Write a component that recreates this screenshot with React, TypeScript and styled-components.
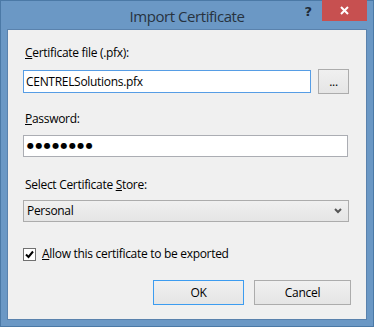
import styled, { createGlobalStyle } from 'styled-components';

const GlobalStyle = createGlobalStyle`
  html, body {
    margin: 0;
    padding: 0;
    background: #ffffff;
  }
  body {
    font-family: 'Open Sans', 'Noto Sans', 'Liberation Sans', sans-serif;
  }
`;

function App() {
  return (
    <>
      <GlobalStyle />
      <Window>
        <TitleBar>
          <Title>Import Certificate</Title>
          <HelpButton>?</HelpButton>
          <CloseButton aria-label="Close">
            <svg width="9" height="9" viewBox="0 0 9 9">
              <path d="M1 1 L8 8 M8 1 L1 8" stroke="#ffffff" strokeWidth="2" />
            </svg>
          </CloseButton>
        </TitleBar>
        <Client>
          <Label $top={15}>
            <u>C</u>ertificate file (.pfx):
          </Label>
          <FileRow>
            <TextField $width={288} $focused>
              CENTRELSolutions.pfx
            </TextField>
            <Button $width={31} $height={25}>
              <Dots>...</Dots>
            </Button>
          </FileRow>
          <Label $top={17}>
            <u>P</u>assword:
          </Label>
          <TextField $width={325} $top={8}>
            <Bullets>●●●●●●●●</Bullets>
          </TextField>
          <Label $top={20}>
            Select Certificate <u>S</u>tore:
          </Label>
          <Select>
            <span>Personal</span>
            <svg width="8" height="6" viewBox="0 0 8 6">
              <path d="M1 1 L4 4 L7 1" stroke="#555555" strokeWidth="2" fill="none" />
            </svg>
          </Select>
          <CheckRow>
            <CheckBox>
              <svg width="11" height="11" viewBox="0 0 11 11">
                <path d="M2 5.5 L4.5 8 L9 2.5" stroke="#000000" strokeWidth="2" fill="none" />
              </svg>
            </CheckBox>
            <span>
              <u>A</u>llow this certificate to be exported
            </span>
          </CheckRow>
          <ButtonRow>
            <Button $width={91} $height={25} $default>
              OK
            </Button>
            <Button $width={97} $height={25}>
              Cancel
            </Button>
          </ButtonRow>
        </Client>
      </Window>
    </>
  );
}

export default App;

const Window = styled.div`
  width: 374px;
  height: 327px;
  box-sizing: border-box;
  border: 1px solid #4b79a6;
  background: #6b98c5;
  display: flex;
  flex-direction: column;
`;

const TitleBar = styled.div`
  position: relative;
  height: 28px;
  display: flex;
  align-items: center;
  justify-content: center;
`;

const Title = styled.div`
  font-size: 15px;
  letter-spacing: -0.45px;
  color: #27333f;
  line-height: 20px;
  margin-top: 1px;
`;

const HelpButton = styled.div`
  position: absolute;
  right: 61px;
  top: 3px;
  font-family: 'DejaVu Sans', sans-serif;
  font-weight: bold;
  font-size: 13px;
  color: #1f2b37;
`;

const CloseButton = styled.div`
  position: absolute;
  right: 6px;
  top: -1px;
  width: 45px;
  height: 21px;
  background: #c75050;
  display: flex;
  align-items: center;
  justify-content: center;
`;

const Client = styled.div`
  flex: 1;
  margin: 0 6px 6px 6px;
  border: 1px solid #5a82ad;
  background: #f0f0f0;
  padding: 0 15px;
  display: flex;
  flex-direction: column;
  align-items: flex-start;
  font-size: 12px;
  letter-spacing: -0.3px;
  color: #000000;
`;

const Label = styled.div<{ $top: number }>`
  margin-top: ${(p) => p.$top}px;
  margin-left: 2px;
  line-height: 16px;
`;

const FileRow = styled.div`
  margin-top: 8px;
  display: flex;
  align-items: center;
  gap: 7px;
`;

const TextField = styled.div<{ $width: number; $focused?: boolean; $top?: number }>`
  box-sizing: border-box;
  width: ${(p) => p.$width}px;
  height: ${(p) => (p.$focused ? 23 : 22)}px;
  margin-top: ${(p) => p.$top ?? 0}px;
  border: 1px solid ${(p) => (p.$focused ? '#569de5' : '#abadb3')};
  background: #ffffff;
  padding: 0 2px;
  display: flex;
  align-items: center;
  line-height: 16px;
`;

const Bullets = styled.span`
  font-family: 'DejaVu Sans', sans-serif;
  font-size: 8px;
  letter-spacing: 1.4px;
  margin-left: 1px;
`;

const Button = styled.div<{ $width: number; $height: number; $default?: boolean }>`
  box-sizing: border-box;
  width: ${(p) => p.$width}px;
  height: ${(p) => p.$height}px;
  border: 1px solid ${(p) => (p.$default ? '#3c9cf0' : '#acacac')};
  background: linear-gradient(#f0f0f0, #e5e5e5);
  display: flex;
  align-items: center;
  justify-content: center;
  line-height: 16px;
`;

const Dots = styled.span`
  font-size: 12px;
  margin-top: 1px;
`;

const Select = styled.div`
  box-sizing: border-box;
  margin-top: 7px;
  width: 326px;
  height: 22px;
  border: 1px solid #acacac;
  background: linear-gradient(#f0f0f0, #e5e5e5);
  display: flex;
  align-items: center;
  justify-content: space-between;
  padding: 0 6px 0 3px;
  line-height: 16px;
`;

const CheckRow = styled.div`
  margin-top: 24px;
  display: flex;
  align-items: center;
  gap: 6px;
  line-height: 16px;
`;

const CheckBox = styled.div`
  box-sizing: border-box;
  width: 13px;
  height: 13px;
  border: 1px solid #707070;
  background: #ffffff;
  display: flex;
  align-items: center;
  justify-content: center;
`;

const ButtonRow = styled.div`
  margin-top: 18px;
  margin-left: 130px;
  display: flex;
  gap: 10px;
`;
